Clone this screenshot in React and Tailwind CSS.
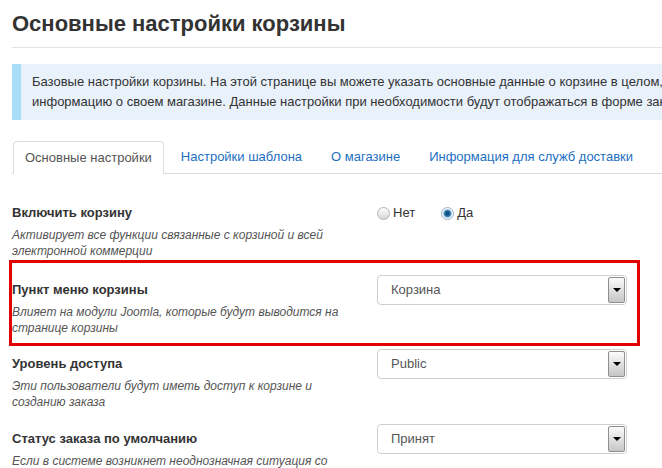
import React from "react";

const font = { fontFamily: '"Liberation Sans", Arial, sans-serif' };

function Select({ value }) {
  return (
    <div className="flex h-[30px] w-[250px] items-stretch rounded-[4px] border border-[#cfcfcf] bg-white p-[1px]">
      <div className="flex flex-1 items-center pl-[12px] text-[13px] text-[#555]">{value}</div>
      <div className="flex w-[17px] items-center justify-center rounded-[2px] border border-[#8e8e8e] bg-[linear-gradient(#fbfbfb,#c6c6c6)]">
        <span className="h-0 w-0 border-l-[4px] border-r-[4px] border-t-[4px] border-l-transparent border-r-transparent border-t-black" />
      </div>
    </div>
  );
}

function Radio({ checked }) {
  return checked ? (
    <span className="inline-block h-[13px] w-[13px] rounded-full border border-[#9bb4c6] bg-[radial-gradient(circle,#0b3f66_0,#1f6a9c_2.5px,#5b9cc4_3.5px,#e9f1f6_4.5px,#ffffff_6px)]" />
  ) : (
    <span className="inline-block h-[13px] w-[13px] rounded-full border border-[#b4b4b4] bg-[linear-gradient(#ffffff,#d6d6d6)]" />
  );
}

function Row({ label, desc, children, pb, extra }) {
  return (
    <div className={`relative flex items-start ${pb}`}>
      {extra}
      <div className="w-[365px] pt-[6px]">
        <div className="text-[13px] font-bold leading-[18px] text-[#333]">{label}</div>
        <div className="mt-[5px] text-[12px] italic leading-[16px] text-[#555]">{desc}</div>
      </div>
      <div>{children}</div>
    </div>
  );
}

export default function App() {
  return (
    <div className="relative h-[468px] w-[662px] overflow-hidden bg-white" style={font}>
      <div className="w-[720px] pl-[12px]">
        <h1 className="pt-[11px] text-[22px] font-bold leading-[26px] text-[#333]">
          Основные настройки корзины
        </h1>
        <div className="mt-[10px] h-px bg-[#e3e3e3]" />

        <div className="mt-[16px] flex h-[56px] bg-[#e9f1fb]">
          <div className="w-[9px] bg-[#a9dcf8]" />
          <div className="whitespace-nowrap py-[8px] pl-[11px] text-[13px] leading-[20px] text-[#333]">
            Базовые настройки корзины. На этой странице вы можете указать основные данные о корзине в целом, а также
            <br />
            информацию о своем магазине. Данные настройки при необходимости будут отображаться в форме заказа.
          </div>
        </div>

        <div className="mt-[21px] flex h-[33px] border-b border-[#dddddd] text-[13px]">
          <div className="relative z-10 ml-[1px] mr-[5px] flex h-[33px] items-center rounded-t-[4px] border border-b-0 border-[#dddddd] bg-white px-[11px] text-[#555]">
            Основные настройки
          </div>
          <div className="mr-[5px] flex h-[32px] items-center px-[12px] text-[#1d6fbf]">Настройки шаблона</div>
          <div className="mr-[5px] flex h-[32px] items-center px-[12px] text-[#1d6fbf]">О магазине</div>
          <div className="flex h-[32px] items-center px-[12px] text-[#1d6fbf]">Информация для служб доставки</div>
        </div>

        <div className="mt-[24px]">
          <Row
            label="Включить корзину"
            desc={<>Активирует все функции связанные с корзиной и всей<br />электронной коммерции</>}
            pb="pb-[16px]"
          >
            <div className="flex items-center pt-[6px] text-[13px] leading-[18px] text-[#333]">
              <Radio />
              <span className="ml-[3px]">Нет</span>
              <span className="ml-[26px] flex items-center">
                <Radio checked />
              </span>
              <span className="ml-[3px]">Да</span>
            </div>
          </Row>

          <Row
            label="Пункт меню корзины"
            desc={<>Влияет на модули Joomla, которые будут выводится на<br />странице корзины</>}
            pb="pb-[13px]"
            extra={
              <div className="pointer-events-none absolute left-[-3px] top-[-15px] z-20 h-[86px] w-[631px] border-[3px] border-[#e30000]" />
            }
          >
            <Select value="Корзина" />
          </Row>

          <Row
            label="Уровень доступа"
            desc={<>Эти пользователи будут иметь доступ к корзине и<br />созданию заказа</>}
            pb="pb-[14px]"
          >
            <Select value="Public" />
          </Row>

          <Row
            label="Статус заказа по умолчанию"
            desc={<>Если в системе возникнет неоднозначная ситуация со<br />статусом заказа</>}
            pb="pb-[14px]"
          >
            <Select value="Принят" />
          </Row>
        </div>
      </div>
    </div>
  );
}
